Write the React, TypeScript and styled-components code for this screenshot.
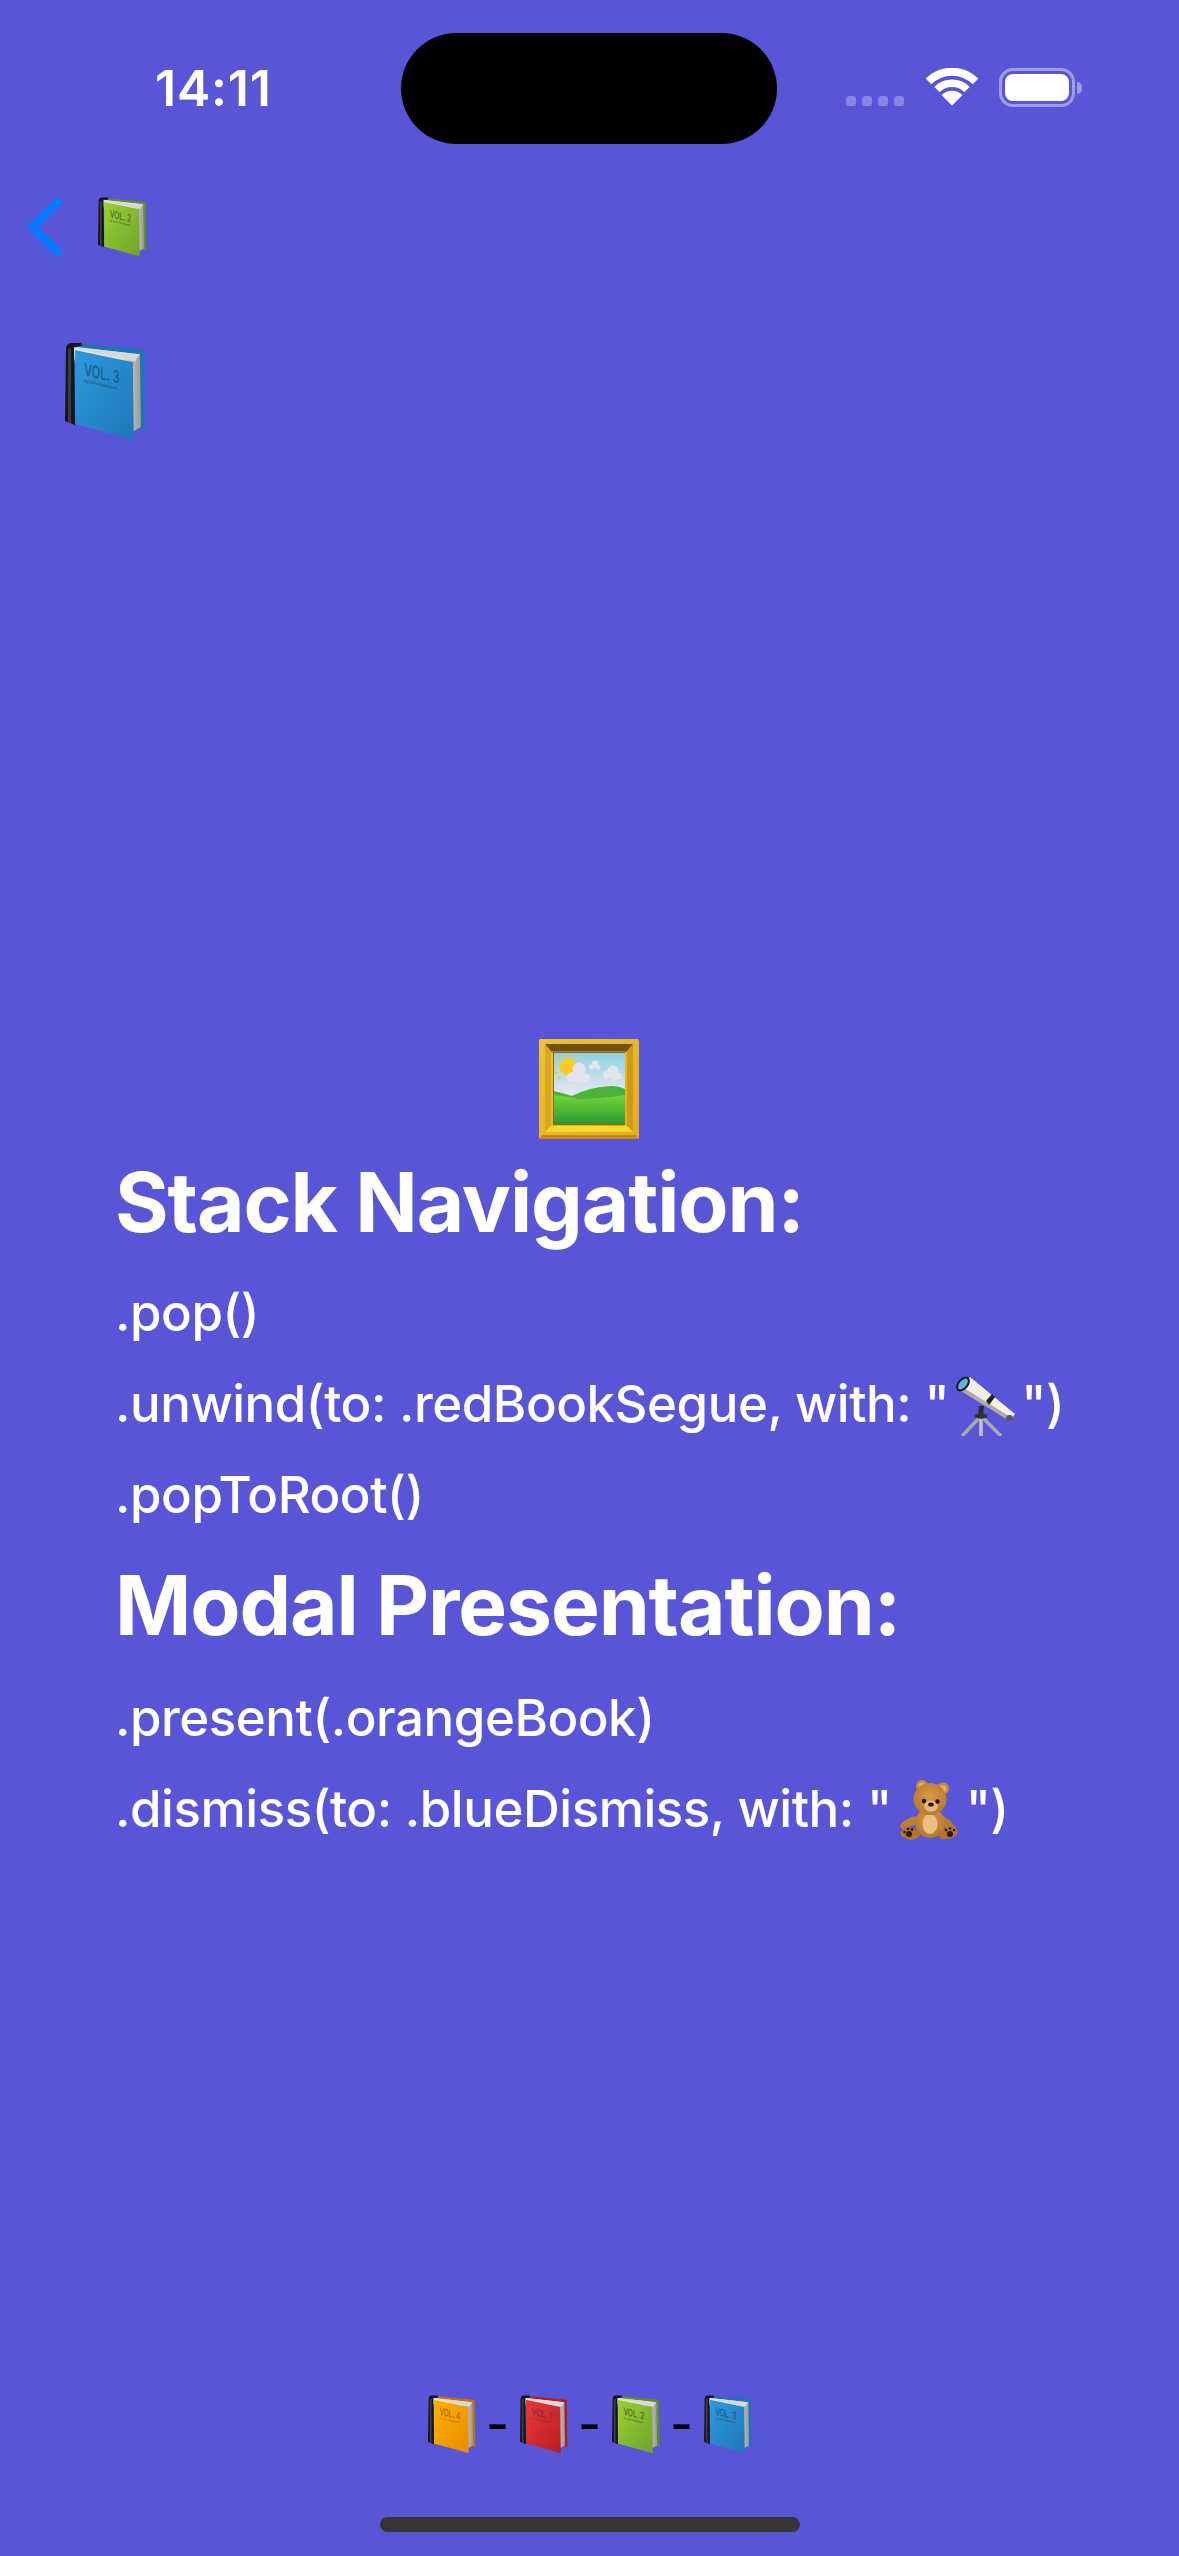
import React from "react";
import styled, { createGlobalStyle } from "styled-components";

const Global = createGlobalStyle`
  html, body { margin: 0; padding: 0; background: #5856d6; }
  * { box-sizing: border-box; }
`;

const Page = styled.div`
  width: 1179px;
  height: 2556px;
  overflow: hidden;
  display: flex;
  flex-direction: column;
  background: #5856d6;
  color: #fff;
  font-family: Inter, "Liberation Sans", sans-serif;
`;

const StatusBar = styled.header`
  display: grid;
  grid-template-columns: 401px 376px 1fr;
  padding-top: 33px;
  height: 164px;
  flex: none;
`;

const Time = styled.div`
  padding: 25px 0 0 155px;
  font-size: 50px;
  line-height: 60px;
  font-weight: 600;
  letter-spacing: 0.8px;
`;

const Island = styled.div`
  height: 111px;
  border-radius: 56px;
  background: #000;
`;

const StatusIcons = styled.div`
  display: flex;
  align-items: flex-start;
  padding: 35px 0 0 69px;
`;

const Signal = styled.div`
  display: flex;
  gap: 6px;
  margin: 28px 22px 0 0;
`;

const SignalDot = styled.span`
  width: 10px;
  height: 10px;
  border-radius: 3px;
  background: rgba(255, 255, 255, 0.28);
`;

const Battery = styled.div`
  width: 76px;
  height: 39px;
  margin-left: 21px;
  padding: 3px;
  border: 3px solid rgba(255, 255, 255, 0.42);
  border-radius: 14px;
`;

const BatteryFill = styled.div`
  height: 100%;
  border-radius: 8px;
  background: #fff;
`;

const BatteryNub = styled.div`
  width: 5px;
  height: 12px;
  margin: 14px 0 0 2px;
  border-radius: 0 5px 5px 0;
  background: rgba(255, 255, 255, 0.42);
`;

const NavBar = styled.nav`
  display: flex;
  align-items: center;
  gap: 35px;
  height: 60px;
  padding-left: 27px;
  margin-top: 33px;
  flex: none;
`;

const CurrentBook = styled.div`
  margin: 85px 0 0 65px;
  height: 97px;
  flex: none;
`;

const Content = styled.main`
  display: flex;
  flex-direction: column;
  margin-top: 600px;
  flex: none;
`;

const Picture = styled.div`
  display: flex;
  justify-content: center;
  height: 100px;
  padding-right: 1px;
`;

const TextBlock = styled.div`
  padding-left: 115px;
`;

const Heading = styled.h2<{ $top: number }>`
  margin: ${(p) => p.$top}px 0 0;
  font-size: 82px;
  line-height: 100px;
  font-weight: 700;
  letter-spacing: -1.1px;
`;

const Call = styled.p<{ $top?: number }>`
  margin: ${(p) => p.$top ?? 0}px 0 0;
  font-size: 51px;
  line-height: 91px;
  font-weight: 500;
  letter-spacing: -0.47px;
  white-space: nowrap;
`;

const InlineEmoji = styled.svg<{ $gap: number; $drop: number }>`
  display: inline-block;
  width: 60px;
  height: 60px;
  margin: 0 ${(p) => p.$gap}px;
  vertical-align: ${(p) => p.$drop}px;
`;

const Footer = styled.footer`
  margin-top: auto;
  display: flex;
  flex-direction: column;
  align-items: center;
  padding-bottom: 24px;
`;

const BookTrail = styled.div`
  display: flex;
  align-items: center;
  gap: 13px;
  height: 60px;
  margin-bottom: 63px;
`;

const Dash = styled.span`
  width: 18px;
  display: flex;
  justify-content: center;
  font-size: 50px;
  line-height: 60px;
  font-weight: 500;
  color: #000;
`;

const HomeIndicator = styled.div`
  width: 420px;
  height: 15px;
  border-radius: 8px;
  background: #363636;
`;

const BookArt = styled.svg`
  display: block;
`;

type BookProps = {
  id: string;
  w: number;
  cover: string;
  coverDark: string;
  back: string;
  ink: string;
  label: string;
};

const Book = ({ id, w, cover, coverDark, back, ink, label }: BookProps) => (
  <BookArt width={w} height={(w * 97) / 80} viewBox="0 0 80 97" aria-hidden="true">
    <defs>
      <linearGradient id={`c-${id}`} x1="0" y1="0" x2="1" y2="1">
        <stop offset="0" stopColor={cover} />
        <stop offset="1" stopColor={coverDark} />
      </linearGradient>
      <linearGradient id={`p-${id}`} x1="0" y1="0" x2="1" y2="0">
        <stop offset="0" stopColor="#f4f4f4" />
        <stop offset="0.7" stopColor="#e6e6e6" />
        <stop offset="1" stopColor="#9a9a9a" />
      </linearGradient>
    </defs>
    <path d="M16 2 L78 8 L79 87 L70 85 L16 40 Z" fill={back} />
    <path d="M6 5 L74 12 L75 84 L68 88 L10 20 Z" fill={`url(#p-${id})`} />
    <path d="M10 7 L69 19 L74 12 L12 5 Z" fill="#d8d8d8" />
    <path d="M1 6 Q2 1 6 1 L16 1 L17 4 L9 5 L10 82 L0 78 Z" fill="#14161c" />
    <path d="M3 7 L6 6 L6 80 L3 79 Z" fill="#3a3d44" />
    <path d="M10 8 L67 20 L68 97 L10 81 Z" fill={`url(#c-${id})`} />
    <g transform="translate(19 33) skewY(13)" fill={ink} fontFamily="Inter, sans-serif">
      <text fontSize="17" fontWeight="500" textLength="35" lengthAdjust="spacingAndGlyphs">{label}</text>
      <text y="6.5" fontSize="3.9" fontWeight="600" textLength="33">by John Appleseed</text>
    </g>
  </BookArt>
);

const Wifi = () => (
  <svg width="52" height="38" viewBox="0 0 52 38" aria-hidden="true">
    <path d="M2.5 13.5 A33 33 0 0 1 49.5 13.5" fill="none" stroke="#fff" strokeWidth="8" />
    <path d="M11 21.5 A21 21 0 0 1 41 21.5" fill="none" stroke="#fff" strokeWidth="7.5" />
    <path d="M26 37.5 L15.5 27 A15 15 0 0 1 36.5 27 Z" fill="#fff" />
  </svg>
);

const Chevron = () => (
  <svg width="36" height="60" viewBox="0 0 36 60" aria-hidden="true">
    <path d="M31 5 L5 30 L31 55" fill="none" stroke="#007aff" strokeWidth="8" strokeLinecap="round" strokeLinejoin="round" />
  </svg>
);

const FramedPicture = () => (
  <svg width="100" height="100" viewBox="0 0 100 100" aria-hidden="true">
    <defs>
      <linearGradient id="sky" x1="0" y1="0" x2="0" y2="1">
        <stop offset="0" stopColor="#8cd0e6" />
        <stop offset="0.55" stopColor="#e2e6ec" />
      </linearGradient>
      <linearGradient id="grass" x1="0" y1="0" x2="0" y2="1">
        <stop offset="0" stopColor="#74d43c" />
        <stop offset="1" stopColor="#2f9a2c" />
      </linearGradient>
      <linearGradient id="gold" x1="0" y1="0" x2="1" y2="1">
        <stop offset="0" stopColor="#eec132" />
        <stop offset="1" stopColor="#e2ac20" />
      </linearGradient>
    </defs>
    <rect width="100" height="100" rx="1.5" fill="url(#gold)" />
    <path d="M0 100 L3 96 L97 96 L100 100 Z" fill="#c98a18" />
    <path d="M6 5 L94 5 L89 12 L11 12 Z" fill="#6f5210" />
    <path d="M11 12 L89 12 L86 14 L14 14 Z" fill="#b27a24" />
    <path d="M6 5 L12 12 L12 88 L6 92 Z" fill="#d9a821" />
    <path d="M94 5 L88 12 L88 88 L94 92 Z" fill="#cf9a1b" />
    <path d="M12 87 L88 87 L94 93 L6 93 Z" fill="#fad72c" />
    <rect x="14" y="13" width="72" height="73" fill="#8a6a16" />
    <rect x="15" y="14" width="71" height="71" fill="url(#sky)" />
    <g fill="#ffc91a">
      <circle cx="29" cy="28" r="8.5" />
      <circle cx="16.5" cy="28" r="1.4" />
      <circle cx="18.5" cy="21" r="1.4" />
      <circle cx="24" cy="17.5" r="1.4" />
      <circle cx="30" cy="17" r="1.4" />
      <circle cx="36" cy="19" r="1.4" />
      <circle cx="17" cy="34" r="1.4" />
      <circle cx="20" cy="39" r="1.4" />
    </g>
    <g fill="#e4e4ec">
      <circle cx="40" cy="30" r="6.5" />
      <circle cx="33" cy="38" r="5" />
      <circle cx="41" cy="38" r="6" />
      <circle cx="47" cy="39" r="4" />
      <circle cx="56" cy="25" r="3.5" />
      <circle cx="52.5" cy="28" r="2.5" />
      <circle cx="59" cy="28" r="2.5" />
      <circle cx="74" cy="32" r="5.5" />
      <circle cx="68" cy="36" r="4" />
      <circle cx="75" cy="37" r="4.5" />
      <circle cx="80" cy="37" r="3" />
    </g>
    <path d="M15 52 Q24 54 33 57 Q50 48 72 47 Q80 47 86 50 L86 85 L15 85 Z" fill="#4cb33a" />
    <path d="M15 56 Q30 58 40 60 Q62 60 86 56 L86 85 L15 85 Z" fill="url(#grass)" />
  </svg>
);

const Telescope = () => (
  <InlineEmoji $gap={6} $drop={-14} viewBox="0 0 60 60" aria-hidden="true">
    <g stroke="#a8a8a8" strokeWidth="3.6" fill="none">
      <path d="M26 40 L7 60" />
      <path d="M26 40 L26 60" stroke="#c2c2c2" />
      <path d="M26 40 L46 60" />
    </g>
    <path d="M24 30 L29 30 L28 40 L23 40 Z" fill="#2c2c2c" />
    <ellipse cx="26" cy="40" rx="6.5" ry="2.8" fill="#333" />
    <path d="M4 13 L15 1 L60 38 L55 45 Z" fill="#f1efe8" />
    <path d="M6 15 L9 12 L57 42 L55 45 Z" fill="#aeaca6" />
    <path d="M31 25 L37 18 L40 21 L34 29 Z" fill="#222" />
    <ellipse cx="54.5" cy="42" rx="3.4" ry="3" fill="#555" />
    <ellipse cx="8" cy="8" rx="5.5" ry="8.5" transform="rotate(40 8 8)" fill="#1d1f24" />
    <ellipse cx="8" cy="8" rx="3.4" ry="6.5" transform="rotate(40 8 8)" fill="#5fb3dc" />
  </InlineEmoji>
);

const Teddy = () => (
  <InlineEmoji $gap={7} $drop={-13} viewBox="0 0 60 60" aria-hidden="true">
    <defs>
      <radialGradient id="fur" cx="0.5" cy="0.4" r="0.7">
        <stop offset="0" stopColor="#d79a44" />
        <stop offset="1" stopColor="#b0732a" />
      </radialGradient>
    </defs>
    <circle cx="23" cy="6" r="6" fill="#c68c3c" />
    <circle cx="44" cy="8.5" r="6" fill="#c68c3c" />
    <circle cx="23" cy="6" r="3.2" fill="#e2b26c" />
    <circle cx="44" cy="8.5" r="3.2" fill="#e2b26c" />
    <path d="M16 36 Q6 39 1 45 Q1 49 5 49 Q14 46 21 42 Z" fill="#bd7f32" />
    <path d="M44 36 Q52 40 56 47 L50 50 Q44 46 40 42 Z" fill="#b87a2e" />
    <ellipse cx="31" cy="43" rx="15" ry="15" fill="url(#fur)" />
    <ellipse cx="31" cy="44" rx="7.5" ry="10" fill="#eabf83" />
    <path d="M6 47 Q18 49 22 53 Q20 59 11 60 Q2 58 1 53 Z" fill="#b27428" />
    <path d="M38 53 Q46 48 56 46 Q60 52 57 56 Q50 60 42 59 Z" fill="#b27428" />
    <ellipse cx="31" cy="19" rx="16.5" ry="16" fill="url(#fur)" />
    <ellipse cx="32" cy="26" rx="7" ry="5.5" fill="#e6b777" />
    <circle cx="25" cy="21" r="2.2" fill="#1d130c" />
    <circle cx="38.5" cy="21.5" r="2.2" fill="#1d130c" />
    <ellipse cx="32" cy="24.5" rx="2.8" ry="2" fill="#1d130c" />
    <g fill="#2a1a0e">
      <circle cx="10" cy="54" r="3" />
      <circle cx="5.5" cy="52" r="1.3" />
      <circle cx="9" cy="49" r="1.3" />
      <circle cx="13" cy="49.5" r="1.3" />
      <circle cx="51" cy="54" r="3" />
      <circle cx="47" cy="50" r="1.3" />
      <circle cx="51" cy="48.5" r="1.3" />
      <circle cx="55" cy="50" r="1.3" />
    </g>
  </InlineEmoji>
);

const palette = {
  orange: { cover: "#ffb300", coverDark: "#e88a00", back: "#c96f05", ink: "#b45f05", label: "VOL. 4" },
  red: { cover: "#e63a3a", coverDark: "#b81d22", back: "#b51a1f", ink: "#8e2a36", label: "VOL. 1" },
  green: { cover: "#9bd033", coverDark: "#6ea32a", back: "#5f9020", ink: "#4a6e28", label: "VOL. 2" },
  blue: { cover: "#2d9ade", coverDark: "#1f76b8", back: "#1a76b4", ink: "#1f5a8c", label: "VOL. 3" },
};

export default function App() {
  return (
    <Page>
      <Global />
      <StatusBar>
        <Time>14:11</Time>
        <Island />
        <StatusIcons>
          <Signal>
            <SignalDot />
            <SignalDot />
            <SignalDot />
            <SignalDot />
          </Signal>
          <Wifi />
          <Battery>
            <BatteryFill />
          </Battery>
          <BatteryNub />
        </StatusIcons>
      </StatusBar>
      <NavBar>
        <Chevron />
        <Book id="nav" w={49} {...palette.green} />
      </NavBar>
      <CurrentBook>
        <Book id="current" w={81} {...palette.blue} />
      </CurrentBook>
      <Content>
        <Picture>
          <FramedPicture />
        </Picture>
        <TextBlock>
          <Heading $top={14}>Stack Navigation:</Heading>
          <Call $top={14}>.pop()</Call>
          <Call>
            .unwind(to: .redBookSegue, with: "<Telescope />")
          </Call>
          <Call>.popToRoot()</Call>
          <Heading $top={16}>Modal Presentation:</Heading>
          <Call $top={16}>.present(.orangeBook)</Call>
          <Call>
            .dismiss(to: .blueDismiss, with: "<Teddy />")
          </Call>
        </TextBlock>
      </Content>
      <Footer>
        <BookTrail>
          <Book id="t1" w={48} {...palette.orange} />
          <Dash>-</Dash>
          <Book id="t2" w={48} {...palette.red} />
          <Dash>-</Dash>
          <Book id="t3" w={48} {...palette.green} />
          <Dash>-</Dash>
          <Book id="t4" w={48} {...palette.blue} />
        </BookTrail>
        <HomeIndicator />
      </Footer>
    </Page>
  );
}
